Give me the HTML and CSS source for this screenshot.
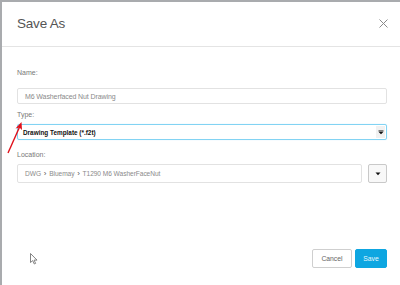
FILE: index.html
```html
<!DOCTYPE html>
<html lang="en">

<head>
    <meta charset="UTF-8">
    <title>Save As</title>
    <link rel="stylesheet" href="styles.css">
</head>

<body>
    <div class="dialog">
        <div class="dialog-header">
            <h1 class="title">Save As</h1>
            <span class="close">
                <svg width="9" height="9" viewBox="0 0 9 9"><path d="M0.5 0.5L8.5 8.5M8.5 0.5L0.5 8.5" stroke="#8a8a8a" stroke-width="1" fill="none"/></svg>
            </span>
        </div>

        <div class="dialog-body">
            <label class="label label-name">Name:</label>
            <div class="field field-name">M6 Washerfaced Nut Drawing</div>

            <label class="label label-type">Type:</label>
            <div class="field field-type">
                <span>Drawing Template (*.f2t)</span>
                <span class="caret-box">
                    <svg width="6" height="5" viewBox="0 0 6 5"><path d="M0.5 0.5H5.5V1.3H0.5Z M0.5 1.8H5.5L3 4.3Z" fill="#111"/></svg>
                </span>
            </div>

            <label class="label label-location">Location:</label>
            <div class="location-row">
                <div class="field field-location">
                    <span class="crumbs">DWG <span class="sep">&rsaquo;</span> Bluemay <span class="sep">&rsaquo;</span> T1290 M6 WasherFaceNut</span>
                </div>
                <button class="drop-btn">
                    <svg width="6" height="4" viewBox="0 0 6 4"><path d="M0.5 0.5H5.5L3 3.3Z" fill="#111"/></svg>
                </button>
            </div>
        </div>

        <div class="dialog-footer">
            <button class="btn btn-cancel">Cancel</button>
            <button class="btn btn-save">Save</button>
        </div>
    </div>

    <!-- annotation arrow -->
    <svg class="annotation" width="30" height="40" viewBox="0 0 30 40">
        <path d="M3 35L15 8" stroke="#e0101a" stroke-width="1.4" fill="none"/>
        <path d="M16.5 4L10.5 10.5L14.5 9.5L17 12Z" fill="#e0101a"/>
    </svg>

    <!-- mouse pointer -->
    <svg class="pointer" width="8" height="12" viewBox="0 0 8 12">
        <path d="M0.5 0.5V9.5L2.7 7.6L4.3 11L5.6 10.4L4.1 7.1H7Z" fill="#fff" stroke="#666" stroke-width="0.8"/>
    </svg>
</body>

</html>
```

FILE: styles.css
```css
* {
    margin: 0;
    box-sizing: border-box;
}

body {
    background-color: #a9abae;
    margin: 0;
    padding: 2px 0 0 2px;
    width: 400px;
    height: 285px;
    overflow: hidden;
    font-family: 'Liberation Sans', Arial, sans-serif;
}

.dialog {
    background-color: #fff;
    height: 283px;
    display: flex;
    flex-direction: column;
}

.dialog-header {
    height: 45px;
    border-bottom: 1px solid #e4e4e4;
    display: flex;
    align-items: center;
    justify-content: space-between;
    padding: 0 12px 1px 15px;
}

.title {
    font-size: 13.5px;
    font-weight: normal;
    color: #555;
    letter-spacing: -0.2px;
}

.close {
    display: flex;
}

.dialog-body {
    padding: 21px 13px 0 15px;
    display: flex;
    flex-direction: column;
}

.label {
    font-size: 7px;
    color: #777;
    line-height: 9px;
}

.field {
    border: 1px solid #e2e2e2;
    border-radius: 2px;
    font-size: 7px;
    color: #8a8a8a;
    display: flex;
    align-items: center;
    padding: 0 7px;
}

.field-name {
    height: 16px;
    margin-top: 11px;
    letter-spacing: -0.1px;
}

.label-type {
    margin-top: 6px;
}

.field-type {
    height: 16px;
    margin-top: 5px;
    border: 1px solid #82d3f3;
    box-shadow: 0 0 1px #a9e2f8;
    color: #111;
    font-weight: bold;
    font-size: 6.4px;
    padding: 0 1px 0 5px;
    justify-content: space-between;
}

.caret-box {
    width: 9px;
    height: 12px;
    background-color: #f1f1f1;
    display: flex;
    align-items: center;
    justify-content: center;
}

.label-location {
    margin-top: 10px;
}

.location-row {
    margin-top: 5px;
    display: flex;
    gap: 6px;
}

.field-location {
    flex: 1;
    height: 19px;
    padding: 0 7px;
}

.crumbs {
    white-space: nowrap;
    font-size: 6.6px;
    letter-spacing: -0.05px;
}

.sep {
    color: #555;
    font-size: 8px;
    padding: 0 1px;
}

.drop-btn {
    width: 19px;
    height: 19px;
    border: 1px solid #c9c9c9;
    border-radius: 2px;
    background-color: #f8f8f8;
    display: flex;
    align-items: center;
    justify-content: center;
    padding: 0;
}

.dialog-footer {
    margin-top: auto;
    display: flex;
    justify-content: flex-end;
    gap: 3px;
    padding: 0 13px 17px 0;
}

.btn {
    height: 19px;
    font-family: 'Liberation Sans', Arial, sans-serif;
    font-size: 6.8px;
    border-radius: 2px;
    padding: 0;
}

.btn-cancel {
    width: 40px;
    background-color: #fff;
    border: 1px solid #cfcfcf;
    color: #666;
}

.btn-save {
    width: 32px;
    background-color: #0ea6e1;
    border: 1px solid #0ea6e1;
    color: #e8f7fd;
}

.annotation {
    position: absolute;
    left: 5px;
    top: 118px;
}

.pointer {
    position: absolute;
    left: 30px;
    top: 253px;
}
```
